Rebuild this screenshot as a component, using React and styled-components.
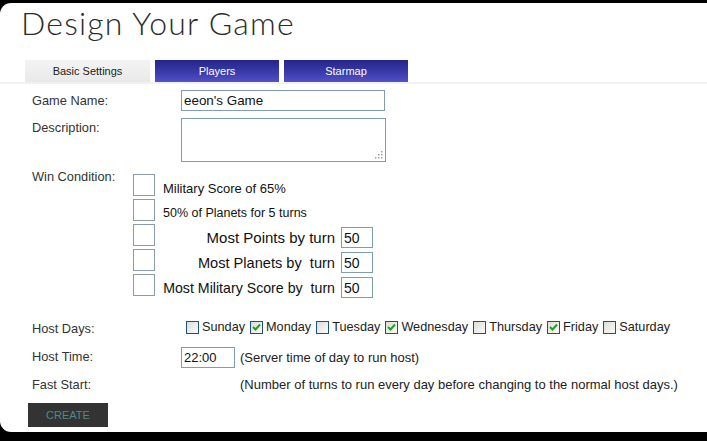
import React from 'react';
import styled, { createGlobalStyle } from 'styled-components';

const GlobalStyle = createGlobalStyle`
  html, body {
    margin: 0;
    padding: 0;
    background: #000000;
  }
  body {
    font-family: "Liberation Sans", Arial, sans-serif;
    color: #333333;
  }
`;

const Page = styled.div`
  height: 441px;
  padding-top: 3px;
  box-sizing: border-box;
`;

const Panel = styled.div`
  background: #ffffff;
  border-radius: 11px 0 0 11px;
  height: 429px;
  display: flex;
  flex-direction: column;
`;

const Title = styled.h1`
  margin: 0;
  padding: 1px 0 0 21px;
  font-family: Lato, "DejaVu Sans", sans-serif;
  font-weight: 300;
  font-size: 32px;
  line-height: 38px;
  letter-spacing: 1.2px;
  color: #2b2b2b;
`;

const TabBar = styled.div`
  display: flex;
  gap: 5px;
  margin-top: 18px;
  padding-left: 25px;
  border-bottom: 2px solid #f1f1f1;
`;

const Tab = styled.div`
  width: ${p => p.$w}px;
  height: 22px;
  display: flex;
  align-items: center;
  justify-content: center;
  font-size: 11px;
  color: ${p => (p.$active ? '#222' : '#fff')};
  background: ${p =>
    p.$active
      ? 'linear-gradient(#f4f4f4, #e9e9e9)'
      : 'linear-gradient(#25258a, #3c3cae 60%, #5252c4)'};
`;

const Form = styled.div`
  display: flex;
  flex-direction: column;
  padding-left: 32px;
  margin-top: 6px;
`;

const Row = styled.div`
  display: flex;
  align-items: flex-start;
  margin-top: ${p => p.$mt || 0}px;
`;

const Label = styled.div`
  width: ${p => p.$w}px;
  flex-shrink: 0;
  font-size: 12.8px;
  line-height: 15px;
  margin-top: ${p => p.$pt || 0}px;
  color: #333;
`;

const TextBox = styled.div`
  width: ${p => p.$w}px;
  height: ${p => p.$h}px;
  box-sizing: border-box;
  border: 1px solid #7f9db9;
  font-size: ${p => p.$fs || 13}px;
  padding-left: 2px;
  display: flex;
  align-items: center;
  color: #111;
  background: #fff;
  flex-shrink: 0;
`;

const Area = styled.div`
  width: 205px;
  height: 44px;
  box-sizing: border-box;
  border: 1px solid #7f9db9;
  display: flex;
  align-items: flex-end;
  justify-content: flex-end;
  padding: 0 2px 2px 0;
`;

const WinList = styled.div`
  display: flex;
  flex-direction: column;
  gap: 3px;
`;

const WinItem = styled.div`
  display: flex;
  align-items: flex-end;
  height: 22px;
`;

const BigBox = styled.div`
  width: 22px;
  height: 22px;
  box-sizing: border-box;
  border: 1px solid #8d9aa8;
  flex-shrink: 0;
  margin-right: 8px;
`;

const WinText = styled.div`
  display: flex;
  justify-content: ${p => (p.$right ? 'flex-end' : 'flex-start')};
  font-size: ${p => p.$fs}px;
  line-height: 15px;
  width: ${p => (p.$right ? '172px' : 'auto')};
  flex-shrink: 0;
  padding-bottom: ${p => p.$pb || 0}px;
  color: #111;
  white-space: pre;
`;

const TurnInput = styled(TextBox)`
  margin-left: 6px;
  margin-bottom: -2px;
`;

const Days = styled.div`
  display: flex;
  align-items: center;
  gap: 5px;
`;

const Day = styled.div`
  display: flex;
  align-items: center;
  gap: 3px;
  font-size: 12.7px;
  color: #222;
`;

const SmallBox = styled.div`
  width: 13px;
  height: 13px;
  box-sizing: border-box;
  border: 1px solid #1c5180;
  background: linear-gradient(135deg, #dcdcd7, #fbfbf9);
  display: flex;
  align-items: center;
  justify-content: center;
`;

const Note = styled.div`
  font-size: 13px;
  line-height: 15px;
  color: #222;
  margin-left: ${p => p.$ml || 0}px;
  padding-top: ${p => p.$pt || 0}px;
`;

const CreateButton = styled.button`
  width: 80px;
  height: 24px;
  margin: 11px 0 0 28px;
  background: #333333;
  border: none;
  color: #4f8a86;
  font-family: "Liberation Sans", Arial, sans-serif;
  font-size: 11px;
  padding: 0;
`;

const Check = () => (
  <svg width="9" height="8" viewBox="0 0 9 8">
    <path d="M1 4 L3.5 6.5 L8 1.5" stroke="#21a121" strokeWidth="2" fill="none" />
  </svg>
);

const Grip = () => (
  <svg width="9" height="9" viewBox="0 0 9 9" fill="#9aa3ad">
    <rect x="7" y="1" width="1.5" height="1.5" />
    <rect x="4" y="4" width="1.5" height="1.5" />
    <rect x="7" y="4" width="1.5" height="1.5" />
    <rect x="1" y="7" width="1.5" height="1.5" />
    <rect x="4" y="7" width="1.5" height="1.5" />
    <rect x="7" y="7" width="1.5" height="1.5" />
  </svg>
);

const days = [
  ['Sunday', false],
  ['Monday', true],
  ['Tuesday', false],
  ['Wednesday', true],
  ['Thursday', false],
  ['Friday', true],
  ['Saturday', false]
];

export default function App() {
  return (
    <Page>
      <GlobalStyle />
      <Panel>
        <Title>Design Your Game</Title>
        <TabBar>
          <Tab $w={125} $active>Basic Settings</Tab>
          <Tab $w={124}>Players</Tab>
          <Tab $w={124}>Starmap</Tab>
        </TabBar>
        <Form>
          <Row>
            <Label $w={149} $pt={3}>Game Name:</Label>
            <TextBox $w={204} $h={21} $fs={13.4}>eeon's Game</TextBox>
          </Row>
          <Row $mt={7}>
            <Label $w={149} $pt={2}>Description:</Label>
            <Area>
              <Grip />
            </Area>
          </Row>
          <Row $mt={12}>
            <Label $w={101} $pt={-5}>Win Condition:</Label>
            <WinList>
              <WinItem>
                <BigBox />
                <WinText $fs={13} $pb={0}>Military Score of 65%</WinText>
              </WinItem>
              <WinItem>
                <BigBox />
                <WinText $fs={12.5} $pb={0}>50% of Planets for 5 turns</WinText>
              </WinItem>
              <WinItem>
                <BigBox />
                <WinText $fs={15} $right $pb={1}>Most Points by turn</WinText>
                <TurnInput $w={32} $h={21} $fs={14}>50</TurnInput>
              </WinItem>
              <WinItem>
                <BigBox />
                <WinText $fs={14.6} $right $pb={0}>{'Most Planets by  turn'}</WinText>
                <TurnInput $w={32} $h={21} $fs={14}>50</TurnInput>
              </WinItem>
              <WinItem>
                <BigBox />
                <WinText $fs={14.2} $right $pb={0}>{'Most Military Score by  turn'}</WinText>
                <TurnInput $w={32} $h={21} $fs={14}>50</TurnInput>
              </WinItem>
            </WinList>
          </Row>
          <Row $mt={24}>
            <Label $w={154} $pt={1}>Host Days:</Label>
            <Days>
              {days.map(([name, on]) => (
                <Day key={name}>
                  <SmallBox>{on && <Check />}</SmallBox>
                  {name}
                </Day>
              ))}
            </Days>
          </Row>
          <Row $mt={11}>
            <Label $w={149} $pt={2}>Host Time:</Label>
            <TextBox $w={54} $h={21} $fs={13}>22:00</TextBox>
            <Note $ml={5} $pt={3}>(Server time of day to run host)</Note>
          </Row>
          <Row $mt={9}>
            <Label $w={208}>Fast Start:</Label>
            <Note>(Number of turns to run every day before changing to the normal host days.)</Note>
          </Row>
        </Form>
        <CreateButton>CREATE</CreateButton>
      </Panel>
    </Page>
  );
}
